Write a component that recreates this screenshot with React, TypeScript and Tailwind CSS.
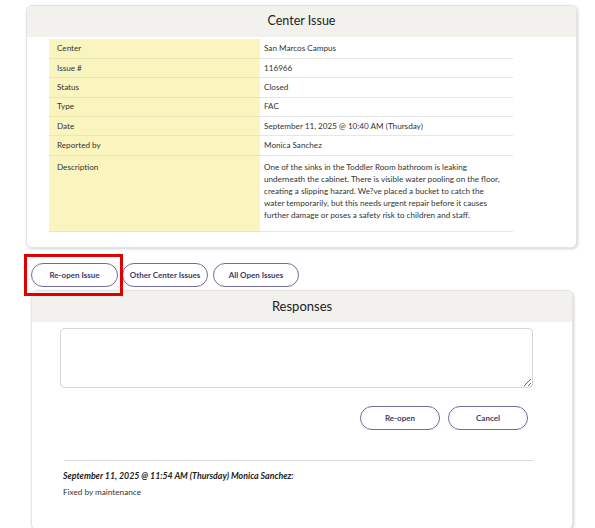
import React from 'react';

const rows: [string, string][] = [
  ['Center', 'San Marcos Campus'],
  ['Issue #', '116966'],
  ['Status', 'Closed'],
  ['Type', 'FAC'],
  ['Date', 'September 11, 2025 @ 10:40 AM (Thursday)'],
  ['Reported by', 'Monica Sanchez'],
];

const description =
  'One of the sinks in the Toddler Room bathroom is leaking underneath the cabinet. There is visible water pooling on the floor, creating a slipping hazard. We?ve placed a bucket to catch the water temporarily, but this needs urgent repair before it causes further damage or poses a safety risk to children and staff.';

function PillButton({ label, className }: { label: string; className: string }) {
  return (
    <button
      className={`h-[24px] rounded-full border border-[#6e6d9c] bg-white text-[8px] font-bold text-[#3c3b6a] ${className}`}
    >
      {label}
    </button>
  );
}

export default function App() {
  return (
    <div
      className="relative h-[528px] w-[595px] overflow-hidden bg-white text-[#333]"
      style={{ fontFamily: 'Lato, "Open Sans", sans-serif' }}
    >
      {/* issue card */}
      <div className="ml-[26px] mt-[5px] w-[551px] overflow-hidden rounded-[6px] border border-[#e4e4e4] bg-white pb-[15px] shadow-[1px_1px_3px_rgba(0,0,0,0.18)]">
        <div className="flex h-[31px] items-center justify-center bg-[#f2f1ee] text-[12.5px] text-[#222]">
          Center Issue
        </div>
        <table className="ml-[22px] mt-[2px] w-[464px] border-collapse text-[8.15px]">
          <tbody>
            {rows.map(([k, v]) => (
              <tr key={k}>
                <td className="h-[19.4px] w-[211px] border-b border-[#ece6b4] bg-[#faf4be] pl-[8px] align-middle leading-[11px]">
                  {k}
                </td>
                <td className="h-[19.4px] border-b border-[#e6e6e6] pl-[4px] align-middle leading-[11px]">
                  {v}
                </td>
              </tr>
            ))}
            <tr>
              <td className="w-[211px] border-b border-[#ece6b4] bg-[#faf4be] pl-[8px] pt-[5px] align-top leading-[12px]">
                Description
              </td>
              <td className="border-b border-[#e6e6e6] pb-[10px] pl-[4px] pr-[12px] pt-[5px] align-top leading-[12px]">
                {description}
              </td>
            </tr>
          </tbody>
        </table>
      </div>

      {/* action buttons */}
      <div className="ml-[31px] mt-[15px] flex">
        <PillButton label="Re-open Issue" className="w-[87px]" />
        <PillButton label="Other Center Issues" className="ml-[4px] w-[86px]" />
        <PillButton label="All Open Issues" className="ml-[5px] w-[86px]" />
      </div>
      <div className="pointer-events-none absolute left-[24px] top-[254px] h-[42px] w-[99px] border-[3px] border-[#e00000]" />

      {/* responses card */}
      <div className="ml-[31px] mt-[3px] h-[240px] w-[542px] overflow-hidden rounded-[6px] border border-[#e4e4e4] bg-white shadow-[1px_1px_3px_rgba(0,0,0,0.18)]">
        <div className="flex h-[31px] items-center justify-center bg-[#f2f1ee] text-[13px] text-[#222]">
          Responses
        </div>
        <textarea className="ml-[28px] mt-[6px] block h-[60px] w-[473px] rounded-[4px] border border-[#d6d6d6] bg-white" />
        <div className="mr-[44px] mt-[18px] flex justify-end gap-[8px]">
          <PillButton label="Re-open" className="w-[80px]" />
          <PillButton label="Cancel" className="w-[80px]" />
        </div>
        <div className="ml-[32px] mt-[30px] w-[470px] border-t border-[#dcdcdc]" />
        <div className="ml-[31px] mt-[8px] text-[8.8px] font-bold italic text-[#222]">
          September 11, 2025 @ 11:54 AM (Thursday) Monica Sanchez:
        </div>
        <div className="ml-[31px] mt-[4px] text-[8.2px] text-[#333]">Fixed by maintenance</div>
      </div>
    </div>
  );
}
